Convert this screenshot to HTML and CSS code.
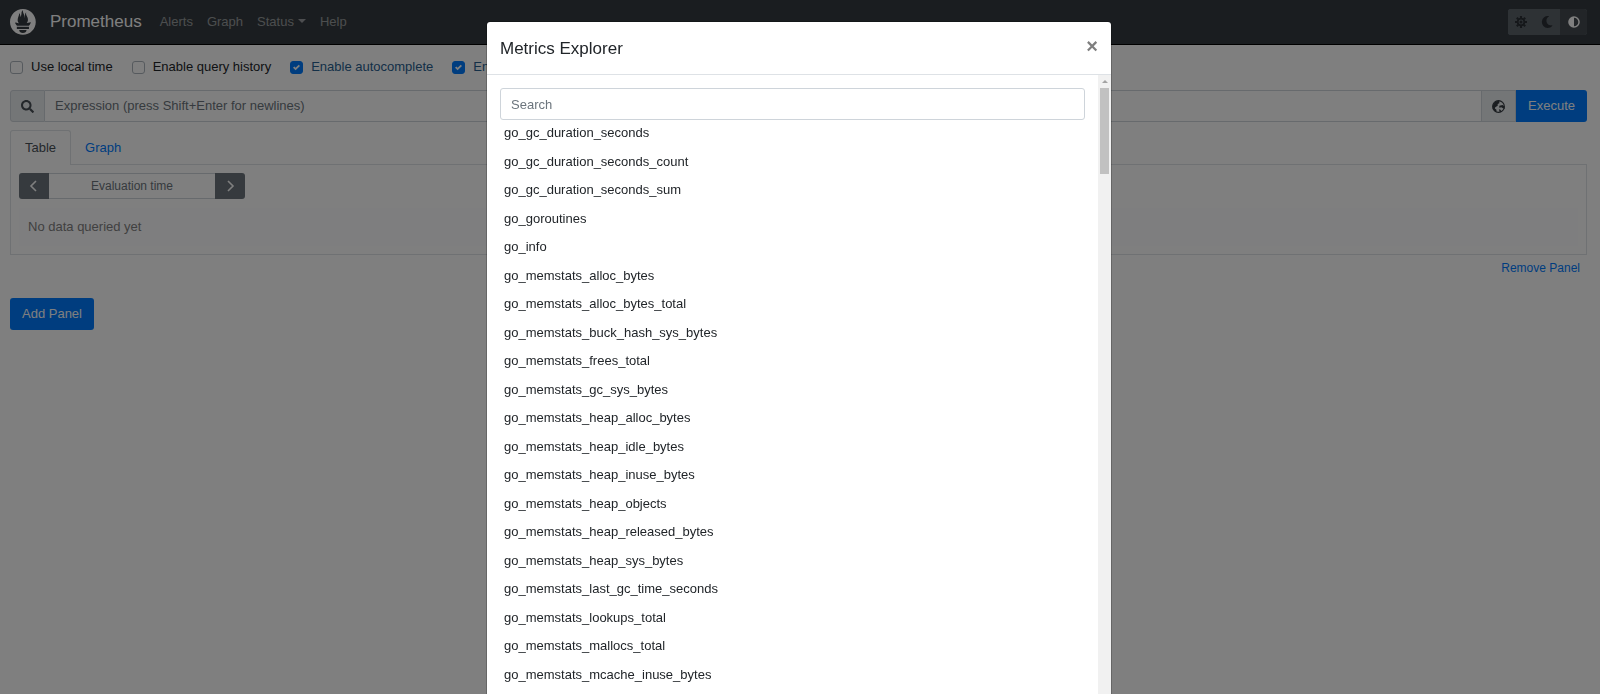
FILE: index.html
```html
<!DOCTYPE html>
<html lang="en">
<head>
<meta charset="utf-8">
<title>Prometheus</title>
<link rel="stylesheet" href="styles.css">
</head>
<body>
<header class="navbar">
  <svg class="logo" viewBox="0 0 115 115" aria-hidden="true"><path fill="#fff" d="M57 0C25.700 0 0 25.700 0 57s25.700 57 57 57 57-25.700 57-57S88.500 0 57 0zm0 106.500c-9 0-16.300-6-16.300-13.400h32.500c0 7.400-7.200 13.400-16.200 13.400zm26.900-17.800H30.200v-9.800h53.700v9.800zm-.2-14.800H30.400l-.5-.6c-5.500-6.700-6.800-10.200-8-13.700 0-.1 6.700 1.400 11.400 2.400 0 0 2.400.6 6 1.200-3.500-4-5.500-9.200-5.500-14.500 0-11.600 8.900-21.700 5.700-29.900 3.100.3 6.500 6.600 6.700 16.500 3.300-4.600 4.700-12.900 4.700-18.100 0-5.300 3.500-11.500 7-11.700-3.100 5.100.8 9.500 4.300 20.400 1.300 4.100 1.100 11 2.100 15.400.3-9.100 1.900-22.300 7.500-26.900-2.500 5.700.4 12.700 2.400 16.100 3.200 5.500 5.100 9.700 5.100 17.600 0 5.300-2 10.300-5.300 14.100 3.700-.7 6.300-1.300 6.300-1.300l12.200-2.400c.1 0-1.700 7.300-8.600 15.400z"/></svg>
  <a class="brand" href="#">Prometheus</a>
  <nav class="nav">
    <a href="#">Alerts</a>
    <a href="#">Graph</a>
    <a class="caret" href="#">Status</a>
    <a href="#">Help</a>
  </nav>
  <div class="theme">
    <button type="button" aria-label="Light theme"><svg viewBox="0 0 16 16"><g fill="none" stroke="currentColor"><circle cx="8" cy="8" r="4.500" stroke-width="2.400"/><path stroke-width="2.800" d="M8 0v4M8 12v4M0 8h4M12 8h4M2.400 2.400l2 2M11.600 11.600l2 2M13.600 2.400l-2 2M4.400 11.600l-2 2"/></g><circle cx="8" cy="8" r="2" fill="currentColor"/></svg></button>
    <button type="button" aria-label="Dark theme"><svg viewBox="0 0 512 512"><path fill="currentColor" d="M283 512c79 0 151-36 199-95 7-9-1-22-12-20-124 24-238-72-238-197 0-73 39-139 102-175 10-6 8-20-4-22A256 256 0 1 0 283 512z"/></svg></button>
    <button type="button" class="active" aria-label="Browser theme"><svg viewBox="0 0 512 512"><path fill="currentColor" d="M8 256a248 248 0 1 0 496 0 248 248 0 1 0-496 0zm248 184V72a184 184 0 0 1 0 368z"/></svg></button>
  </div>
</header>
<main class="page">
  <div class="options">
    <label><input type="checkbox">Use local time</label>
    <label><input type="checkbox">Enable query history</label>
    <label><input type="checkbox" checked><span>Enable autocomplete</span></label>
    <label><input type="checkbox" checked><span>Enable highlighting</span></label>
    <label><input type="checkbox" checked><span>Enable linter</span></label>
  </div>
  <div class="query">
    <span class="addon"><svg viewBox="0 0 512 512" aria-hidden="true"><path fill="currentColor" d="M505 442.700L405.300 343c-4.500-4.500-10.600-7-17-7H372c27.600-35.300 44-79.700 44-128C416 93.100 322.900 0 208 0S0 93.100 0 208s93.100 208 208 208c48.300 0 92.700-16.400 128-44v16.300c0 6.400 2.500 12.500 7 17l99.700 99.700c9.400 9.400 24.600 9.400 33.900 0l28.300-28.300c9.400-9.400 9.400-24.600.1-34zM208 336c-70.700 0-128-57.200-128-128 0-70.700 57.200-128 128-128 70.700 0 128 57.200 128 128 0 70.700-57.200 128-128 128z"/></svg></span>
    <input class="expression" type="text" aria-label="Expression" placeholder="Expression (press Shift+Enter for newlines)">
    <button class="addon explorer" type="button" aria-label="Open metrics explorer"><svg viewBox="0 0 16 16"><circle cx="8" cy="8" r="7.200" fill="none" stroke="currentColor" stroke-width="1.400"/><path fill="currentColor" d="M8 1L4 2 1 6v5l3 3.500 1.500.5V12l-2-1.500L4 9l3-2V5l2-1V1zM9 7l4-1 2.500 2v3l-2-1-2-1-2.500.500zM8.500 11.500l2 .5 1 2-2 1z"/></svg></button>
    <button class="btn execute" type="button">Execute</button>
  </div>
  <div class="tabs">
    <button class="tab selected" type="button">Table</button>
    <button class="tab" type="button">Graph</button>
  </div>
  <section class="panel">
    <div class="time">
      <button type="button" aria-label="Decrease evaluation time"><svg viewBox="0 0 12 12"><path d="M8 1L3 6l5 5"/></svg></button>
      <input type="text" aria-label="Evaluation time" placeholder="Evaluation time">
      <button type="button" aria-label="Increase evaluation time"><svg viewBox="0 0 12 12"><path d="M4 1l5 5-5 5"/></svg></button>
    </div>
    <div class="notice">No data queried yet</div>
  </section>
  <div class="remove"><button type="button">Remove Panel</button></div>
  <button class="btn add" type="button">Add Panel</button>
</main>
<div class="backdrop">
  <div class="modal" role="dialog" aria-modal="true" aria-labelledby="title">
    <div class="modal-head">
      <h1 id="title">Metrics Explorer</h1>
      <button type="button" class="close" aria-label="Close">×</button>
    </div>
    <div class="modal-body">
      <div class="metrics">
        <input class="search" type="text" aria-label="Search" placeholder="Search">
        <ul class="list">
          <li>go_gc_duration_seconds</li>
          <li>go_gc_duration_seconds_count</li>
          <li>go_gc_duration_seconds_sum</li>
          <li>go_goroutines</li>
          <li>go_info</li>
          <li>go_memstats_alloc_bytes</li>
          <li>go_memstats_alloc_bytes_total</li>
          <li>go_memstats_buck_hash_sys_bytes</li>
          <li>go_memstats_frees_total</li>
          <li>go_memstats_gc_sys_bytes</li>
          <li>go_memstats_heap_alloc_bytes</li>
          <li>go_memstats_heap_idle_bytes</li>
          <li>go_memstats_heap_inuse_bytes</li>
          <li>go_memstats_heap_objects</li>
          <li>go_memstats_heap_released_bytes</li>
          <li>go_memstats_heap_sys_bytes</li>
          <li>go_memstats_last_gc_time_seconds</li>
          <li>go_memstats_lookups_total</li>
          <li>go_memstats_mallocs_total</li>
          <li>go_memstats_mcache_inuse_bytes</li>
        </ul>
      </div>
      <div class="scrollbar" aria-hidden="true"><span class="arrow"></span><span class="thumb"></span></div>
    </div>
  </div>
</div>
</body>
</html>
```
FILE: styles.css
```css
* { box-sizing: border-box; }
body {
  margin: 0;
  font-family: "Liberation Sans", Arial, sans-serif;
  font-size: 13px;
  line-height: 1.5;
  color: #212529;
  background: #fff;
  overflow: hidden;
}
button, input { font: inherit; color: inherit; margin: 0; }
button { cursor: pointer; border: 0; padding: 0; background: none; }
a { text-decoration: none; }
svg { display: block; }
input::placeholder { color: #6c757d; opacity: 1; }

.navbar {
  display: flex;
  align-items: center;
  height: 45px;
  padding: 0 13px 1px 10px;
  background: #343a40;
  border-bottom: 1px solid #000;
}
.logo { width: 26px; height: 26px; margin-right: 14px; }
.brand { font-size: 17px; color: #fff; margin-right: 11px; }
.nav { display: flex; flex: 1; }
.nav a { padding: 0 7px; color: rgba(255, 255, 255, .5); }
.caret::after {
  content: "";
  display: inline-block;
  margin-left: 4px;
  vertical-align: 3px;
  border: 4px solid transparent;
  border-top-color: currentColor;
  border-bottom: 0;
}
.theme { display: flex; border-radius: 3px; overflow: hidden; background: #6c757d; }
.theme button {
  display: grid;
  place-items: center;
  width: 26px;
  height: 26px;
  color: #2a2f34;
  background: #5c646b;
}
.theme .active { width: 27px; color: #fff; background: #454b50; }
.theme svg { width: 12px; height: 12px; }

.page { padding: 12px 13px 0 10px; }
.options { display: flex; gap: 19px; }
.options label { display: flex; align-items: center; gap: 8px; height: 20px; white-space: nowrap; }
.options input {
  appearance: none;
  width: 13px;
  height: 13px;
  border: 1px solid #adb5bd;
  border-radius: 3px;
  background: #fff;
}
.options input:checked {
  border-color: #007bff;
  background: #007bff url("data:image/svg+xml,%3Csvg xmlns='http://www.w3.org/2000/svg' viewBox='0 0 8 8'%3E%3Cpath fill='%23fff' d='M6.564.75l-3.590 3.612-1.538-1.550L0 4.260 2.974 7.250 8 2.193z'/%3E%3C/svg%3E") center / 7px no-repeat;
}
.options input:checked + span { color: #286090; }

.query { display: flex; height: 32px; margin-top: 13px; }
.addon {
  display: grid;
  place-items: center;
  width: 35px;
  color: #495057;
  background: #e9ecef;
  border: 1px solid #ced4da;
  border-radius: 3px 0 0 3px;
}
.addon svg { width: 13px; height: 13px; }
.explorer { border-radius: 0; color: #343a40; }
.expression {
  flex: 1;
  min-width: 0;
  padding: 0 10px;
  border: solid #ced4da;
  border-width: 1px 0;
  background: #fff;
}
.btn { height: 32px; padding: 0 12px; border-radius: 3px; color: #fff; background: #007bff; }
.execute { border-radius: 0 3px 3px 0; }

.tabs { display: flex; margin-top: 8px; }
.tab {
  height: 35px;
  padding: 0 13px;
  color: #007bff;
  border: 1px solid transparent;
  border-bottom: 0;
}
.selected {
  color: #495057;
  background: #fff;
  border-color: #dee2e6;
  border-radius: 3px 3px 0 0;
  position: relative;
}
.selected { padding: 0 14px; }
.panel { margin-top: -1px; padding: 8px; border: 1px solid #dee2e6; }
.time { display: flex; width: 226px; height: 26px; }
.time button { display: grid; place-items: center; width: 30px; background: #6c757d; border-radius: 3px 0 0 3px; }
.time button:last-child { border-radius: 0 3px 3px 0; }
.time svg { width: 12px; height: 12px; fill: none; stroke: #fff; stroke-width: 1.6; }
.time input {
  flex: 1;
  min-width: 0;
  padding: 0;
  font-size: 12px;
  text-align: center;
  border: solid #ced4da;
  border-width: 1px 0;
}
.notice { margin-top: 9px; padding: 9px; color: #818182; background: #fdfdfe; }
.remove { display: flex; justify-content: flex-end; padding: 4px 7px 0; }
.remove button { font-size: 12px; color: #007bff; }
.add { margin-top: 21px; }

.backdrop {
  position: fixed;
  inset: 0;
  display: flex;
  justify-content: center;
  padding: 21px 2px 0 0;
  overflow: hidden;
  background: rgba(0, 0, 0, .5);
}
.modal {
  display: flex;
  flex-direction: column;
  width: 626px;
  background: #fff;
  background-clip: padding-box;
  border: 1px solid rgba(0, 0, 0, .2);
  border-bottom: 0;
  border-radius: 4px 4px 0 0;
}
.modal-head {
  display: flex;
  justify-content: space-between;
  align-items: flex-start;
  padding: 14px 13px 13px;
  border-bottom: 1px solid #dee2e6;
}
.modal-head h1 { margin: 0; font-size: 17px; line-height: 25px; font-weight: 400; }
.close { font-size: 20px; line-height: 20px; font-weight: 700; color: #7f7f7f; }
.modal-body { display: flex; flex: 1; min-height: 0; }
.metrics { flex: 1; padding: 13px; overflow: hidden; }
.search {
  display: block;
  width: 100%;
  height: 32px;
  padding: 0 10px;
  border: 1px solid #ced4da;
  border-radius: 3px;
}
.list { margin: 0; padding: 0; list-style: none; }
.list li { padding: 4px 4px 5px; }
.list li:first-child { padding-top: 3px; }
.scrollbar { display: flex; flex-direction: column; align-items: center; width: 13px; padding-top: 5px; background: #f1f1f1; }
.arrow { border: 3px solid transparent; border-top: 0; border-bottom-color: #a3a3a3; }
.thumb { width: 9px; height: 86px; margin-top: 5px; background: #c1c1c1; }
```
